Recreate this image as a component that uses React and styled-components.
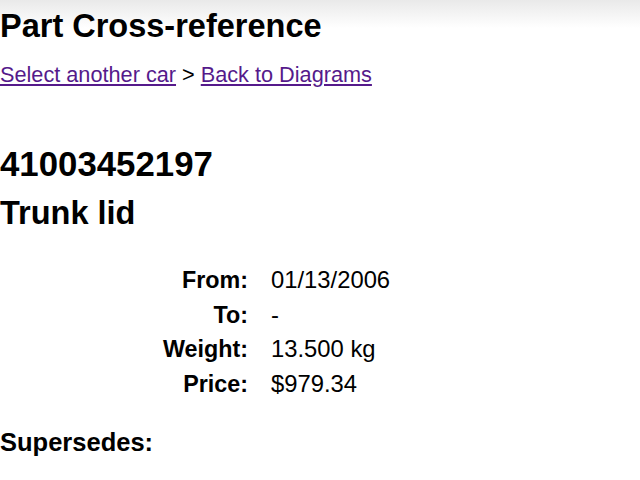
import React from "react";
import styled, { createGlobalStyle } from "styled-components";

const GlobalStyle = createGlobalStyle`
  html, body {
    margin: 0;
    padding: 0;
    background: #fff linear-gradient(#e9e9e9, #ffffff 28px) no-repeat;
    font-family: "Liberation Sans", Arial, Helvetica, sans-serif;
    color: #000;
  }
`;

const Page = styled.div`
  width: 640px;
  height: 480px;
  overflow: hidden;
`;

const Title = styled.h1`
  margin: 0;
  padding-top: 9px;
  font-size: 32.5px;
  line-height: 34px;
  font-weight: 700;
`;

const Crumbs = styled.nav`
  margin-top: 19px;
  font-size: 21.7px;
  line-height: 26px;
`;

const Crumb = styled.a`
  color: #551a8b;
  text-decoration: underline;
`;

const PartNumber = styled.h2`
  margin: 56px 0 0;
  font-size: 34.8px;
  line-height: 40px;
  font-weight: 700;
`;

const PartName = styled.h2`
  margin: 9px 0 0;
  font-size: 32.5px;
  line-height: 40px;
  font-weight: 700;
`;

const Specs = styled.dl`
  display: grid;
  grid-template-columns: 248px auto;
  column-gap: 23px;
  row-gap: 8.7px;
  margin: 34px 0 0;
  font-size: 23.3px;
  line-height: 26px;
`;

const Label = styled.dt`
  text-align: right;
  font-weight: 700;
`;

const Value = styled.dd`
  margin: 0;
  font-size: 23.8px;
`;

const Section = styled.h3`
  margin: 30px 0 0;
  font-size: 25.5px;
  line-height: 30px;
  font-weight: 700;
`;

const specs = [
  ["From:", "01/13/2006"],
  ["To:", "-"],
  ["Weight:", "13.500 kg"],
  ["Price:", "$979.34"],
];

export default function App() {
  return (
    <Page>
      <GlobalStyle />
      <Title>Part Cross-reference</Title>
      <Crumbs>
        <Crumb href="#">Select another car</Crumb> &gt;{" "}
        <Crumb href="#">Back to Diagrams</Crumb>
      </Crumbs>
      <PartNumber>41003452197</PartNumber>
      <PartName>Trunk lid</PartName>
      <Specs>
        {specs.map(([label, value]) => (
          <React.Fragment key={label}>
            <Label>{label}</Label>
            <Value>{value}</Value>
          </React.Fragment>
        ))}
      </Specs>
      <Section>Supersedes:</Section>
    </Page>
  );
}
